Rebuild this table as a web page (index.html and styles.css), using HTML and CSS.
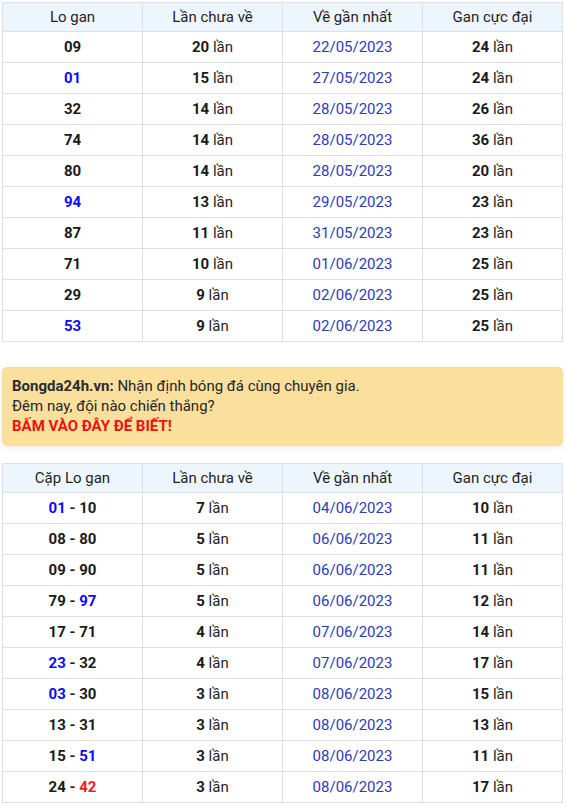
FILE: index.html
```html
<!DOCTYPE html>
<html lang="vi">
<head>
<meta charset="utf-8">
<title>Lo gan</title>
<link rel="stylesheet" href="styles.css">
</head>
<body>
<div class="page">
  <table class="stats">
    <thead>
      <tr><th>Lo gan</th><th>Lần chưa về</th><th>Về gần nhất</th><th>Gan cực đại</th></tr>
    </thead>
    <tbody>
      <tr><td><b>09</b></td><td><b>20</b> lần</td><td class="date">22/05/2023</td><td><b>24</b> lần</td></tr>
      <tr><td><b class="blue">01</b></td><td><b>15</b> lần</td><td class="date">27/05/2023</td><td><b>24</b> lần</td></tr>
      <tr><td><b>32</b></td><td><b>14</b> lần</td><td class="date">28/05/2023</td><td><b>26</b> lần</td></tr>
      <tr><td><b>74</b></td><td><b>14</b> lần</td><td class="date">28/05/2023</td><td><b>36</b> lần</td></tr>
      <tr><td><b>80</b></td><td><b>14</b> lần</td><td class="date">28/05/2023</td><td><b>20</b> lần</td></tr>
      <tr><td><b class="blue">94</b></td><td><b>13</b> lần</td><td class="date">29/05/2023</td><td><b>23</b> lần</td></tr>
      <tr><td><b>87</b></td><td><b>11</b> lần</td><td class="date">31/05/2023</td><td><b>23</b> lần</td></tr>
      <tr><td><b>71</b></td><td><b>10</b> lần</td><td class="date">01/06/2023</td><td><b>25</b> lần</td></tr>
      <tr><td><b>29</b></td><td><b>9</b> lần</td><td class="date">02/06/2023</td><td><b>25</b> lần</td></tr>
      <tr><td><b class="blue">53</b></td><td><b>9</b> lần</td><td class="date">02/06/2023</td><td><b>25</b> lần</td></tr>
    </tbody>
  </table>

  <div class="promo">
    <div><b>Bongda24h.vn:</b> Nhận định bóng đá cùng chuyên gia.</div>
    <div>Đêm nay, đội nào chiến thắng?</div>
    <div class="cta">BẤM VÀO ĐÂY ĐỂ BIẾT!</div>
  </div>

  <table class="stats">
    <thead>
      <tr><th>Cặp Lo gan</th><th>Lần chưa về</th><th>Về gần nhất</th><th>Gan cực đại</th></tr>
    </thead>
    <tbody>
      <tr><td><b><span class="blue">01</span> - 10</b></td><td><b>7</b> lần</td><td class="date">04/06/2023</td><td><b>10</b> lần</td></tr>
      <tr><td><b>08 - 80</b></td><td><b>5</b> lần</td><td class="date">06/06/2023</td><td><b>11</b> lần</td></tr>
      <tr><td><b>09 - 90</b></td><td><b>5</b> lần</td><td class="date">06/06/2023</td><td><b>11</b> lần</td></tr>
      <tr><td><b>79 - <span class="blue">97</span></b></td><td><b>5</b> lần</td><td class="date">06/06/2023</td><td><b>12</b> lần</td></tr>
      <tr><td><b>17 - 71</b></td><td><b>4</b> lần</td><td class="date">07/06/2023</td><td><b>14</b> lần</td></tr>
      <tr><td><b><span class="blue">23</span> - 32</b></td><td><b>4</b> lần</td><td class="date">07/06/2023</td><td><b>17</b> lần</td></tr>
      <tr><td><b><span class="blue">03</span> - 30</b></td><td><b>3</b> lần</td><td class="date">08/06/2023</td><td><b>15</b> lần</td></tr>
      <tr><td><b>13 - 31</b></td><td><b>3</b> lần</td><td class="date">08/06/2023</td><td><b>13</b> lần</td></tr>
      <tr><td><b>15 - <span class="blue">51</span></b></td><td><b>3</b> lần</td><td class="date">08/06/2023</td><td><b>11</b> lần</td></tr>
      <tr><td><b>24 - <span class="red">42</span></b></td><td><b>3</b> lần</td><td class="date">08/06/2023</td><td><b>17</b> lần</td></tr>
    </tbody>
  </table>
</div>
</body>
</html>
```

FILE: styles.css
```css
html, body {
  margin: 0;
  padding: 0;
  background: #fff;
}

body {
  font-family: Roboto, "Liberation Sans", Arial, sans-serif;
  font-size: 15px;
  line-height: 20px;
  color: #1f1f1f;
}

.page {
  padding: 2px 3px 0 2px;
}

.stats {
  width: 100%;
  border-collapse: collapse;
  table-layout: fixed;
}

.stats th,
.stats td {
  border: 1px solid #dcdfe3;
  text-align: center;
}

.stats th {
  background: #eef6fd;
  font-weight: 400;
  padding: 4px 4px;
  color: #1f1f1f;
}

.stats td {
  padding: 5px 4px;
}

.stats b {
  font-weight: 700;
  color: #1a1a1a;
}

.stats b .blue,
.stats .blue {
  color: #0a0aff;
}

.stats b .red {
  color: #f01c1c;
}

.date {
  color: #2a3db8;
}

.promo {
  margin: 25px 0 17px;
  padding: 9px 10px 10px;
  background: #fbe09d;
  border-radius: 5px;
  box-shadow: 0 2px 6px rgba(0, 0, 0, 0.08);
  color: #262626;
}

.promo b {
  color: #2b2b2b;
}

.cta {
  color: #ee0f0f;
  font-weight: 700;
}
```
